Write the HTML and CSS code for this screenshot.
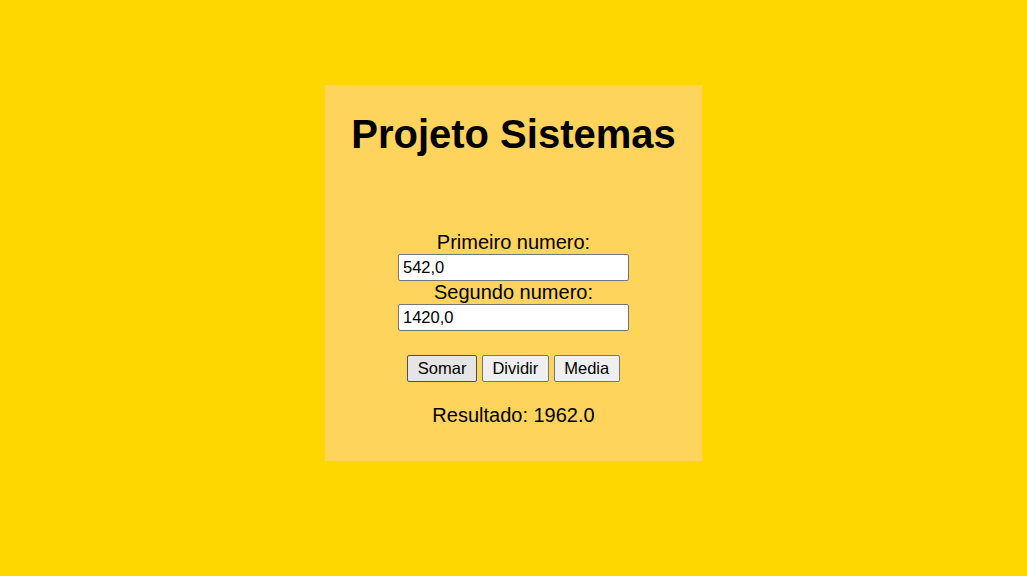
FILE: index.html
```html
<!DOCTYPE html>
<html lang="pt">
<head>
<meta charset="utf-8">
<title>Projeto Sistemas</title>
<link rel="stylesheet" href="styles.css">
</head>
<body>
<main class="page">
  <section class="card">
    <h1 class="title">Projeto Sistemas</h1>
    <form class="form">
      <label class="label" for="n1">Primeiro numero:</label>
      <input class="field" id="n1" type="text" value="542,0">
      <label class="label" for="n2">Segundo numero:</label>
      <input class="field" id="n2" type="text" value="1420,0">
      <div class="actions">
        <button type="button" class="btn btn-active">Somar</button>
        <button type="button" class="btn">Dividir</button>
        <button type="button" class="btn">Media</button>
      </div>
      <p class="result">Resultado: 1962.0</p>
    </form>
  </section>
</main>
</body>
</html>
```

FILE: styles.css
```css
html, body {
  margin: 0;
  padding: 0;
  background: #ffd700;
  font-family: "Liberation Sans", Arial, sans-serif;
  color: #000;
}

.page {
  display: flex;
  justify-content: center;
  padding-top: 85px;
  height: 576px;
  box-sizing: border-box;
}

.card {
  width: 377px;
  height: 376px;
  box-sizing: border-box;
  background: #ffd45c;
  padding-top: 26px;
  display: flex;
  flex-direction: column;
  align-items: center;
}

.title {
  margin: 0;
  font-size: 40px;
  font-weight: bold;
  line-height: 46px;
}

.form {
  margin-top: 74px;
  display: flex;
  flex-direction: column;
  align-items: center;
}

.label {
  font-size: 20px;
  line-height: 23px;
}

.field {
  width: 231px;
  height: 27px;
  box-sizing: border-box;
  margin: 0;
  padding: 0 4px;
  border: 1px solid #767676;
  border-radius: 2px;
  background: #fff;
  font-family: "Liberation Sans", Arial, sans-serif;
  font-size: 16.5px;
  color: #000;
}

.actions {
  margin-top: 24px;
  display: flex;
  gap: 5px;
}

.btn {
  height: 27px;
  box-sizing: border-box;
  margin: 0;
  padding: 0 9.5px;
  border: 1px solid #767676;
  border-radius: 2px;
  background: #efefef;
  font-family: "Liberation Sans", Arial, sans-serif;
  font-size: 16.5px;
  color: #000;
}

.btn-active {
  background: #e5e5e5;
  border-color: #4f4f4f;
}

.result {
  margin: 22px 0 0;
  font-size: 20px;
  line-height: 23px;
}
```
